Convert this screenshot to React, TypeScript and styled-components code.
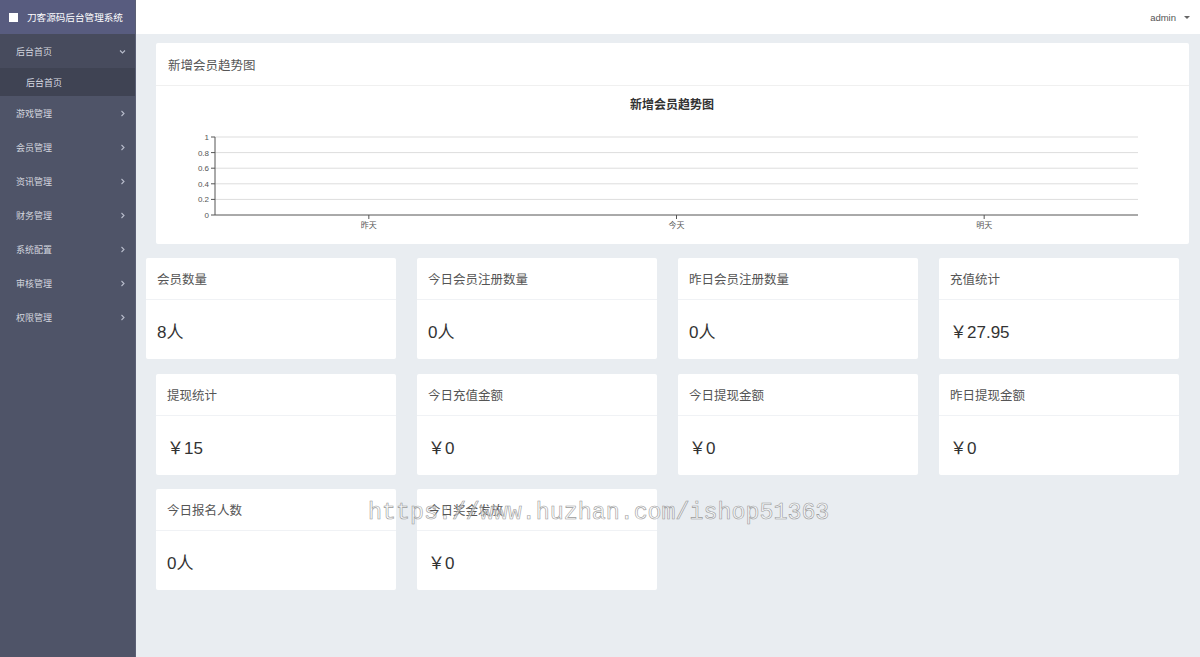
import React from "react";
import styled, { createGlobalStyle } from "styled-components";

interface Stat {
  title: string;
  value: string;
}

const menus = [
  "游戏管理",
  "会员管理",
  "资讯管理",
  "财务管理",
  "系统配置",
  "审核管理",
  "权限管理",
];

const stats: Stat[] = [
  { title: "会员数量", value: "8人" },
  { title: "今日会员注册数量", value: "0人" },
  { title: "昨日会员注册数量", value: "0人" },
  { title: "充值统计", value: "￥27.95" },
  { title: "提现统计", value: "￥15" },
  { title: "今日充值金额", value: "￥0" },
  { title: "今日提现金额", value: "￥0" },
  { title: "昨日提现金额", value: "￥0" },
  { title: "今日报名人数", value: "0人" },
  { title: "今日奖金发放", value: "￥0" },
];

const yTicks = [1, 0.8, 0.6, 0.4, 0.2, 0];
const days = ["昨天", "今天", "明天"];

function TrendChart() {
  const left = 59;
  const right = 982;
  const top = 51;
  const bottom = 129;
  const step = (bottom - top) / (yTicks.length - 1);
  const band = (right - left) / days.length;
  return (
    <svg width="1033" height="158" viewBox="0 0 1033 158">
      <text
        x="516"
        y="23"
        textAnchor="middle"
        fontSize="12"
        fontWeight="bold"
        fill="#333"
        fontFamily="'Noto Sans CJK SC', sans-serif"
      >
        新增会员趋势图
      </text>
      {yTicks.map((t, i) => {
        const y = top + i * step;
        return (
          <g key={t}>
            {i < yTicks.length - 1 && (
              <line x1={left} x2={right} y1={y} y2={y} stroke="#ddd" strokeWidth="1" />
            )}
            <line x1={left - 4} x2={left} y1={y} y2={y} stroke="#555" strokeWidth="1" />
            <text
              x={left - 6}
              y={y + 3}
              textAnchor="end"
              fontSize="8"
              fill="#555"
              fontFamily="'Liberation Sans', sans-serif"
            >
              {t}
            </text>
          </g>
        );
      })}
      <line x1={left} x2={left} y1={top} y2={bottom} stroke="#555" strokeWidth="1" />
      <line x1={left} x2={right} y1={bottom} y2={bottom} stroke="#555" strokeWidth="1" />
      {days.map((d, i) => {
        const x = left + band * (i + 0.5);
        return (
          <g key={d}>
            <line x1={x} x2={x} y1={bottom} y2={bottom + 4} stroke="#555" strokeWidth="1" />
            <text
              x={x}
              y={bottom + 13}
              textAnchor="middle"
              fontSize="8"
              fill="#555"
              fontFamily="'Noto Sans CJK SC', sans-serif"
            >
              {d}
            </text>
          </g>
        );
      })}
    </svg>
  );
}

function Chevron({ open }: { open?: boolean }) {
  return (
    <svg width="7" height="7" viewBox="0 0 7 7">
      <path
        d={open ? "M1 2.5 L3.5 5 L6 2.5" : "M2.5 1 L5 3.5 L2.5 6"}
        fill="none"
        stroke="#b8bccb"
        strokeWidth="1.1"
      />
    </svg>
  );
}

export default function App() {
  return (
    <>
      <GlobalStyle />
      <Layout>
        <Sidebar>
          <Logo>
            <LogoMark />
            刀客源码后台管理系统
          </Logo>
          <MenuItem $open>
            后台首页
            <Chevron open />
          </MenuItem>
          <SubItem>后台首页</SubItem>
          {menus.map((m) => (
            <MenuItem key={m}>
              {m}
              <Chevron />
            </MenuItem>
          ))}
        </Sidebar>
        <Main>
          <Header>
            <User>
              admin
              <Caret />
            </User>
          </Header>
          <Content>
            <ChartCard>
              <ChartHead>新增会员趋势图</ChartHead>
              <TrendChart />
            </ChartCard>
            <StatGrid>
              {stats.map((s, i) => (
                <StatCard key={s.title} $wide={i === 0}>
                  <StatTitle>{s.title}</StatTitle>
                  <StatValue>{s.value}</StatValue>
                </StatCard>
              ))}
            </StatGrid>
            <Watermark>https://www.huzhan.com/ishop51363</Watermark>
          </Content>
        </Main>
      </Layout>
    </>
  );
}

const GlobalStyle = createGlobalStyle`
  html, body {
    margin: 0;
    padding: 0;
    height: 100%;
  }
  body {
    font-family: "Liberation Sans", "Noto Sans CJK SC", sans-serif;
    background: #e9edf1;
  }
`;

const Layout = styled.div`
  display: flex;
  height: 657px;
  overflow: hidden;
`;

const Sidebar = styled.aside`
  width: 136px;
  flex-shrink: 0;
  background: #4f5468;
  border-right: 1px solid #5b6075;
  box-sizing: border-box;
  display: flex;
  flex-direction: column;
`;

const Logo = styled.div`
  height: 34px;
  background: #585c7f;
  display: flex;
  align-items: center;
  padding-left: 9px;
  gap: 9px;
  color: #fff;
  font-size: 9.6px;
  font-family: "Noto Sans CJK SC", sans-serif;
`;

const LogoMark = styled.span`
  width: 9px;
  height: 9px;
  background: #fff;
`;

const MenuItem = styled.div<{ $open?: boolean }>`
  height: 34px;
  display: flex;
  align-items: center;
  justify-content: space-between;
  padding: 0 9px 0 16px;
  background: ${(p) => (p.$open ? "#474b5d" : "transparent")};
  color: #d3d6df;
  font-size: 9px;
  font-family: "Noto Sans CJK SC", sans-serif;
`;

const SubItem = styled.div`
  height: 28px;
  display: flex;
  align-items: center;
  padding-left: 26px;
  background: #3f4353;
  color: #d8dbe3;
  font-size: 9px;
  font-family: "Noto Sans CJK SC", sans-serif;
`;

const Main = styled.div`
  flex: 1;
  display: flex;
  flex-direction: column;
  min-width: 0;
`;

const Header = styled.header`
  height: 34px;
  flex-shrink: 0;
  background: #fff;
  display: flex;
  align-items: center;
  justify-content: flex-end;
  padding-right: 10px;
`;

const User = styled.div`
  display: flex;
  align-items: center;
  gap: 8px;
  font-size: 9.5px;
  color: #555;
`;

const Caret = styled.span`
  width: 0;
  height: 0;
  border-left: 3px solid transparent;
  border-right: 3px solid transparent;
  border-top: 3px solid #666;
`;

const Content = styled.main`
  position: relative;
  flex: 1;
  padding: 9px 11px 0 20px;
  background: #e9edf1;
`;

const ChartCard = styled.section`
  background: #fff;
  border-radius: 2px;
  height: 201px;
  display: flex;
  flex-direction: column;
`;

const ChartHead = styled.div`
  height: 42px;
  flex-shrink: 0;
  border-bottom: 1px solid #f0f0f0;
  display: flex;
  align-items: center;
  padding-left: 12px;
  color: #555;
  font-size: 12.5px;
  font-family: "Noto Sans CJK SC", sans-serif;
`;

const StatGrid = styled.div`
  display: grid;
  grid-template-columns: repeat(4, 240px);
  column-gap: 21px;
  row-gap: 14.5px;
  margin-top: 14px;
`;

const StatCard = styled.div<{ $wide?: boolean }>`
  background: #fff;
  border-radius: 2px;
  height: 101px;
  margin-left: ${(p) => (p.$wide ? "-10px" : "0")};
  display: flex;
  flex-direction: column;
`;

const StatTitle = styled.div`
  height: 41px;
  border-bottom: 1px solid #f0f2f5;
  display: flex;
  align-items: center;
  padding-left: 11px;
  color: #555;
  font-size: 12.5px;
  font-family: "Noto Sans CJK SC", sans-serif;
`;

const StatValue = styled.div`
  flex: 1;
  display: flex;
  align-items: center;
  padding: 2px 0 0 11px;
  color: #333;
  font-size: 17px;
  font-family: "Liberation Sans", "Noto Sans CJK SC", sans-serif;
`;

/* site watermark stamped across the lower cards */
const Watermark = styled.div`
  position: absolute;
  left: 232px;
  top: 466px;
  font-family: "Liberation Mono", "DejaVu Sans Mono", monospace;
  font-size: 23.3px;
  color: rgba(255, 255, 255, 0.5);
  -webkit-text-stroke: 0.6px #9a9a9a;
  pointer-events: none;
  white-space: nowrap;
`;
